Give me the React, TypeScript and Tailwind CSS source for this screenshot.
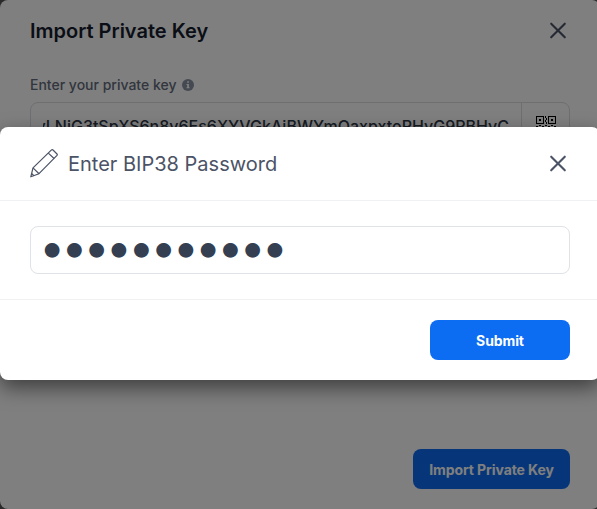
import { useState } from 'react';

const CloseIcon = () => (
  <svg width="18" height="18" viewBox="0 0 18 18" fill="none" stroke="currentColor" strokeWidth="2.1" strokeLinecap="round">
    <path d="M2.2 1.7 15.8 15.3M15.8 1.7 2.2 15.3" />
  </svg>
);

const PencilIcon = () => (
  <svg width="28" height="29" viewBox="0 0 28 29" fill="none" stroke="currentColor" strokeWidth="1.2" strokeLinejoin="round">
    <path d="M.8 27.8 3 18.9 21.5.9Q22.3.3 23 1L27 5Q27.6 5.6 27 6.4L9 24.7Z" />
    <path d="M3 18.9 9 24.7M18.3 4.1l5.8 5.4M1.6 24.5l2.5 2.4" />
  </svg>
);

const InfoIcon = () => (
  <svg width="12" height="12" viewBox="0 0 12 12">
    <circle cx="6" cy="6" r="6" fill="#8a92a2" />
    <path d="M5.2 2.3h1.7v1.5H5.2zM4.5 5h2.4v3.3h.7v1H4.5v-1h.7V6h-.7z" fill="#fff" />
  </svg>
);

const QrIcon = () => (
  <svg width="20" height="20" viewBox="0 0 20 20" fill="#000" shapeRendering="crispEdges">
    <path fillRule="evenodd" d="M0 0h8v8H0zM1 1v6h6V1zM12 0h8v8h-8zM13 1v6h6V1zM0 12h8v8H0zM1 13v6h6v-6z" />
    <path d="M3 3h2v2H3zM15 3h2v2h-2zM3 15h2v2H3zM9 0h1v2H9zM10 2h1v2h-1zM9 4h1v2H9zM10 6h1v2h-1zM0 10h2v1H0zM3 9h2v1H3zM6 10h2v1H6zM9 9h2v1H9zM12 10h2v1h-2zM15 9h2v1h-2zM18 10h2v1h-2zM12 13h3v2h-3zM16 15h3v2h-3zM9 14h2v4H9z" />
  </svg>
);

const privateKey = 'yLNiG3tSpXS6n8v6Es6XYVGkAiBWYmQaxpxtoRHvG9PBHvC';

const App = () => {
  const [password, setPassword] = useState('password123');

  return (
    <div className="relative h-[509px] overflow-hidden bg-[#555] font-[Inter,sans-serif] text-[#4b5366]">
      {/* Import dialog */}
      <div className="flex h-[509px] w-[600px] flex-col rounded-lg bg-white px-[30px] pt-[18px] pb-5">
        <div className="flex h-[26px] items-center justify-between">
          <h1 className="text-xl font-semibold text-[#161c2d]">Import Private Key</h1>
          <button className="mr-[3px]" aria-label="Close"><CloseIcon /></button>
        </div>
        <label className="mt-[31px] flex h-5 items-center gap-[6px] text-sm font-medium text-[#646c7c]">
          Enter your private key <InfoIcon />
        </label>
        <div className="mt-[7px] flex h-12 shrink-0 overflow-hidden rounded-lg border border-[#dbdee3]">
          <div className="flex flex-1 items-center px-3">
            <div className="flex w-0 flex-1 justify-end overflow-hidden text-base font-medium whitespace-nowrap text-[#2f3847]">
              <span>{privateKey}</span>
            </div>
          </div>
          <button className="flex w-12 items-start justify-center border-l border-[#dbdee3] pt-[13px]" aria-label="Scan">
            <QrIcon />
          </button>
        </div>
        <button className="mt-auto h-10 w-[157px] self-end rounded-lg bg-[#0c6cf2] pt-0.5 text-sm font-bold tracking-[-0.1px] text-white">
          Import Private Key
        </button>
      </div>

      {/* Password dialog */}
      <div className="absolute inset-0 bg-black/50 pt-[127px]">
        <div className="h-[253px] w-[600px] rounded-lg bg-white shadow-[0_8px_20px_rgba(0,0,0,0.5)]">
          <div className="flex h-[74px] items-center justify-between border-b border-[#f0f1f3] px-[30px]">
            <div className="flex items-center gap-[10px]">
              <PencilIcon />
              <h2 className="text-xl">Enter BIP38 Password</h2>
            </div>
            <button className="mr-[3px]" aria-label="Close"><CloseIcon /></button>
          </div>
          <div className="border-b border-[#f0f1f3] px-[30px] py-[25px]">
            <input
              type="password"
              className="block h-12 w-full rounded-lg border border-[#dfe2e6] px-[10px] pb-2 text-[47px] leading-none font-bold text-[#343f52] outline-none"
              value={password}
              onChange={e => setPassword(e.target.value)}
            />
          </div>
          <div className="flex justify-end px-[30px] pt-5">
            <button className="h-10 w-[140px] rounded-lg bg-[#0c6cf2] pt-0.5 text-sm font-bold tracking-[-0.1px] text-white">Submit</button>
          </div>
        </div>
      </div>
    </div>
  );
};

export default App;
